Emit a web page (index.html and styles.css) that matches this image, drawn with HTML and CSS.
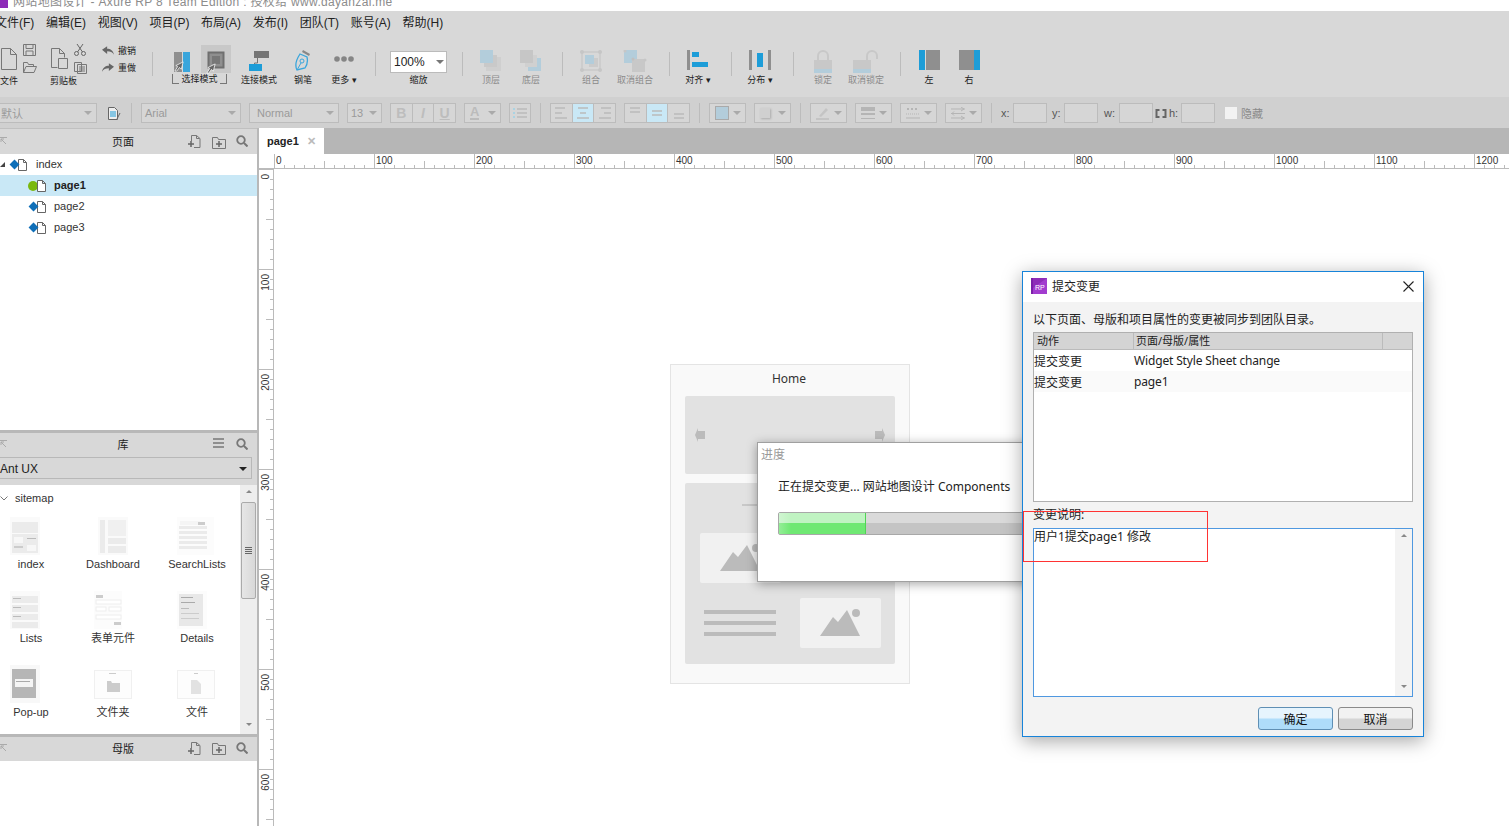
FILE: index.html
```html
<!DOCTYPE html>
<html>
<head>
	<meta charset="utf-8">
	<title>网站地图设计 - Axure RP 8 Team Edition</title>
	<link rel="stylesheet" href="styles.css">
</head>
<body>
	<svg class="defs" width="0" height="0">
		<symbol id="cursor" viewBox="0 0 12 12"><path d="M1 11 4 6 2 5 10 1 8 9 6 7 3 11z" fill="#666" stroke="#fff" stroke-width=".8"/></symbol>
		<symbol id="tree-doc" viewBox="0 0 9 12"><path d="M.5.5h5l3 3v8h-8z M5.500.5v3h3" fill="#fff" stroke="#666"/></symbol>
		<symbol id="add-page" viewBox="0 0 13 13"><path d="M3.500 6V.5h5l3.500 3v9H6 M8.500.5v3h3" fill="none" stroke="#777"/><path d="M0 9h6M3 6v6" stroke="#666" stroke-width="1.500"/></symbol>
		<symbol id="add-folder" viewBox="0 0 14 12"><path d="M.5 11.500V.5h5l1 2h7v9z" fill="none" stroke="#777"/><path d="M4 7h6M7 4v6" stroke="#666" stroke-width="1.500"/></symbol>
		<symbol id="search" viewBox="0 0 12 12"><circle cx="5" cy="5" r="3.800" fill="none" stroke="#777" stroke-width="1.800"/><path d="M8 8l3.500 3.500" stroke="#777" stroke-width="2"/></symbol>
		<symbol id="pin" viewBox="0 0 8 8"><path d="M0 .5h7M1 2l5 5M1 2v3M1 2h3" fill="none" stroke="#aaa"/></symbol>
		<symbol id="mountain" viewBox="0 0 81 50"><path d="M20 38 33 19 38 24 47 12 60 38z" fill="#bbb"/><circle cx="56" cy="15" r="4" fill="#bbb"/></symbol>
	</svg>

	<div class="titlebar">
		<i class="title_logo"></i>
		<span>网站地图设计 - Axure RP 8 Team Edition : 授权给 www.dayanzai.me</span>
	</div>

	<ul class="menubar">
		<li>文件(F)</li><li>编辑(E)</li><li>视图(V)</li><li>项目(P)</li><li>布局(A)</li><li>发布(I)</li><li>团队(T)</li><li>账号(A)</li><li>帮助(H)</li>
	</ul>

	<div class="ribbon">
		<div class="group">
			<div class="group_icons">
				<svg width="18" height="24" class="big_doc"><path d="M1.500 2.500h9l6 6v15h-15z M10.500 2.500v6h6" fill="none" stroke="#777"/></svg>
				<div class="mini_col first">
					<svg width="13" height="12"><path d="M.5.5h12v11H.5z M3 .5v4h7v-4 M3 11.500V7h7v4.500" fill="none" stroke="#777"/></svg>
					<svg width="14" height="12"><path d="M.5 11.500V1.500h4l1 2h5v2 M.5 11.500l2.500-6h10.500l-2.500 6z" fill="none" stroke="#777"/></svg>
				</div>
			</div>
			<p class="group_label">文件</p>
		</div>
		<div class="group clip">
			<div class="group_icons">
				<svg width="18" height="24" class="big_doc"><path d="M1.500 2.500h8l5 5v4 M1.500 2.500v19h6 M9.500 2.500v5h5 M8.500 12.500h9v10h-9z" fill="none" stroke="#777"/></svg>
				<div class="mini_col second">
					<svg width="12" height="12"><circle cx="2.500" cy="9.500" r="2" fill="none" stroke="#666"/><circle cx="9.500" cy="9.500" r="2" fill="none" stroke="#666"/><path d="M3.500 8 9 0M8.500 8 3 0" stroke="#666"/></svg>
					<svg width="13" height="13"><path d="M.5 1.500h7v9h-7z M3.500 3.500h9v9h-9z M5 6h6M5 8h6M5 10h6" fill="#d8d8d8" stroke="#777"/></svg>
				</div>
			</div>
			<p class="group_label">剪贴板</p>
		</div>
		<div class="undo_col gap16">
			<div class="undo_row"><svg width="12" height="9" viewBox="0 0 14 10"><path d="M0 4 6 0v3c4 0 7 2 8 7-2-3-4-4-8-4v3z" fill="#666"/></svg><span>撤销</span></div>
			<div class="undo_row"><svg width="12" height="9" viewBox="0 0 14 10"><path d="M14 4 8 0v3C4 3 1 5 0 10c2-3 4-4 8-4v3z" fill="#666"/></svg><span>重做</span></div>
		</div>
		<i class="rb_sep gap16"></i>
		<div class="tool mode gap19">
			<div class="mode_icons">
				<div class="mode_plain">
					<svg width="18" height="22"><rect x="0" y="2" width="8" height="20" fill="#8f8f8f"/><rect x="9" y="2" width="7" height="20" fill="#3aa6dc"/><use href="#cursor" x="0" y="11" width="11" height="11"/></svg>
				</div>
				<div class="mode_on">
					<svg width="20" height="24"><rect x="2.500" y="2.500" width="15" height="15" fill="#8f8f8f" stroke="#6f6f6f" stroke-width="2"/><rect x="6" y="6" width="8" height="8" fill="#777"/><use href="#cursor" x="0" y="13" width="11" height="11"/></svg>
				</div>
			</div>
			<p class="label bracket">选择模式</p>
		</div>
		<div class="tool wide gap10">
			<svg width="20" height="21"><rect x="5" y="1" width="15" height="7" fill="#757575"/><path d="M8.500 8v5h-3v2" fill="none" stroke="#757575"/><rect x="0" y="14" width="13" height="7" fill="#1d9dd8"/></svg>
			<p class="label">连接模式</p>
		</div>
		<div class="tool narrow gap16">
			<svg width="16" height="22"><path d="M8 0l7 4-1 2-7-4z" fill="#888"/><path d="M5 4l7 3c1 4 0 8-2 11l-8 2c-2-4-1-10 3-16z" fill="none" stroke="#3aa6dc" stroke-width="1.300"/><circle cx="7" cy="11" r="2" fill="none" stroke="#3aa6dc"/><path d="M2 20l4-7" stroke="#3aa6dc"/></svg>
			<p class="label">钢笔</p>
		</div>
		<div class="tool more gap19">
			<svg width="22" height="12"><circle cx="4" cy="6" r="2.800" fill="#858585"/><circle cx="11" cy="6" r="2.800" fill="#858585"/><circle cx="18" cy="6" r="2.800" fill="#858585"/></svg>
			<p class="label">更多 ▾</p>
		</div>
		<i class="rb_sep gap19"></i>
		<div class="tool zoom gap14">
			<div class="zoom_box"><span>100%</span><i class="caret"></i></div>
			<p class="label">缩放</p>
		</div>
		<i class="rb_sep gap15"></i>
		<div class="tool off gap13">
			<svg width="22" height="21"><path d="M6 7h15v14H6z" fill="#cfcfcf"/><rect x="4" y="5" width="13" height="12" fill="#c9c9c9"/><rect x="0" y="0" width="13" height="13" fill="#b3cddb"/></svg>
			<p class="label">顶层</p>
		</div>
		<div class="tool off gap10">
			<svg width="22" height="21"><path d="M8 8h13v13H8z" fill="#b3cddb"/><rect x="5" y="5" width="12" height="12" fill="#d0d0d0"/><rect x="0" y="0" width="13" height="13" fill="#c6c6c6"/></svg>
			<p class="label">底层</p>
		</div>
		<i class="rb_sep gap16"></i>
		<div class="tool off gap13">
			<svg width="22" height="22"><rect x="2" y="2" width="18" height="18" fill="none" stroke="#c6c6c6" stroke-width="1.200"/><circle cx="2" cy="2" r="2" fill="#c6c6c6"/><circle cx="20" cy="2" r="2" fill="#c6c6c6"/><circle cx="2" cy="20" r="2" fill="#c6c6c6"/><circle cx="20" cy="20" r="2" fill="#c6c6c6"/><rect x="9" y="8" width="9" height="9" fill="#cbcbcb"/><rect x="5" y="5" width="9" height="9" fill="#b3cddb"/></svg>
			<p class="label">组合</p>
		</div>
		<div class="tool wide off gap11">
			<svg width="24" height="23"><rect x="1" y="0" width="13" height="13" fill="#b3cddb"/><rect x="9" y="9" width="13" height="13" fill="#c8c8c8"/><circle cx="2" cy="1" r="1.500" fill="#c6c6c6"/><circle cx="10" cy="9" r="1.500" fill="#c0c0c0"/><circle cx="22" cy="10" r="1.500" fill="#c6c6c6"/></svg>
			<p class="label">取消组合</p>
		</div>
		<i class="rb_sep gap16"></i>
		<div class="tool gap13">
			<svg width="22" height="20"><rect x="0" y="0" width="3" height="20" fill="#8f8f8f"/><rect x="5" y="2" width="7" height="5" fill="#1d9dd8"/><rect x="5" y="12" width="16" height="5" fill="#1d9dd8"/></svg>
			<p class="label">对齐 ▾</p>
		</div>
		<i class="rb_sep gap18"></i>
		<div class="tool gap13">
			<svg width="22" height="20"><rect x="0" y="0" width="3" height="20" fill="#8f8f8f"/><rect x="8" y="3" width="6" height="14" fill="#1d9dd8"/><rect x="19" y="0" width="3" height="20" fill="#8f8f8f"/></svg>
			<p class="label">分布 ▾</p>
		</div>
		<i class="rb_sep gap18"></i>
		<div class="tool off gap14">
			<svg width="18" height="23"><path d="M4 11V6a5 5 0 0 1 10 0v5" fill="none" stroke="#c8c8c8" stroke-width="2"/><rect x="0" y="10" width="18" height="9" fill="#c8c8c8"/><rect x="0" y="19" width="18" height="4" fill="#b3cddb"/></svg>
			<p class="label">锁定</p>
		</div>
		<div class="tool wide off gap10">
			<svg width="26" height="23"><path d="M14 11V6a5 5 0 0 1 10 0v3" fill="none" stroke="#c8c8c8" stroke-width="2"/><rect x="0" y="10" width="18" height="9" fill="#c8c8c8"/><rect x="0" y="19" width="18" height="4" fill="#b3cddb"/></svg>
			<p class="label">取消锁定</p>
		</div>
		<i class="rb_sep gap16"></i>
		<div class="tool dark gap13">
			<svg width="21" height="20"><rect x="0" y="0" width="6" height="20" fill="#1d9dd8"/><rect x="7" y="0" width="14" height="20" fill="#8f8f8f"/></svg>
			<p class="label">左</p>
		</div>
		<div class="tool dark gap10">
			<svg width="21" height="20"><rect x="0" y="0" width="15" height="20" fill="#8f8f8f"/><rect x="15" y="0" width="6" height="20" fill="#1d9dd8"/></svg>
			<p class="label">右</p>
		</div>
	</div>

	<div class="formatbar">
		<div class="fsel style_sel">默认<i class="caret"></i></div>
		<svg class="ml3" width="13" height="13"><path d="M.5.5h6l3 3v9h-9z" fill="#eee" stroke="#666"/><path d="M2 5h6M2 7h6M2 9h6" stroke="#1d9dd8"/><path d="M9 12l3-6" stroke="#666"/></svg>
		<i class="fsep ml2"></i>
		<div class="fsel font_sel ml1">Arial<i class="caret"></i></div>
		<div class="fsel normal_sel">Normal<i class="caret"></i></div>
		<div class="fsel size_sel">13<i class="caret"></i></div>
		<div class="fbtns"><b>B</b><b class="it">I</b><b class="un">U</b></div>
		<div class="fsel ico_sel"><span class="a_ico">A</span><i class="caret"></i></div>
		<div class="fcell list_btn"><svg width="14" height="10"><path d="M0 1h2M0 5h2M0 9h2" stroke="#a9d3e3" stroke-width="2"/><path d="M4 1h10M4 5h10M4 9h10" stroke="#bbb" stroke-width="1.500"/></svg></div>
		<i class="fsep ml1"></i>
		<div class="fbtns ml1">
			<span><svg width="12" height="12"><path d="M0 1h10M0 6h7M0 11h12" stroke="#bbb" stroke-width="1.500"/></svg></span>
			<span class="on"><svg width="12" height="12"><path d="M1 1h10M3 6h6M0 11h12" stroke="#bbb" stroke-width="1.500"/></svg></span>
			<span><svg width="12" height="12"><path d="M2 1h10M5 6h7M0 11h12" stroke="#bbb" stroke-width="1.500"/></svg></span>
		</div>
		<div class="fbtns">
			<span><svg width="12" height="12"><path d="M1 1h10M1 5h10" stroke="#bbb" stroke-width="1.500"/></svg></span>
			<span class="on"><svg width="12" height="12"><path d="M1 4h10M1 8h10" stroke="#bbb" stroke-width="1.500"/></svg></span>
			<span><svg width="12" height="12"><path d="M1 7h10M1 11h10" stroke="#bbb" stroke-width="1.500"/></svg></span>
		</div>
		<i class="fsep ml1"></i>
		<div class="fsel ico_sel ml1"><i class="fill_ico"></i><i class="caret"></i></div>
		<div class="fsel ico_sel"><i class="shadow_ico"></i><i class="caret"></i></div>
		<i class="fsep ml1"></i>
		<div class="fsel ico_sel ml1"><svg width="14" height="13"><path d="M3 9l7-8 2 2-7 7z" fill="#c4c4c4"/><path d="M0 12h13" stroke="#c4c4c4" stroke-width="2"/></svg><i class="caret"></i></div>
		<div class="fsel ico_sel"><svg width="14" height="13"><rect width="14" height="4" fill="#b5b5b5"/><rect y="6" width="14" height="2" fill="#b5b5b5"/><rect y="11" width="14" height="1" fill="#b5b5b5"/></svg><i class="caret"></i></div>
		<div class="fsel ico_sel"><svg width="14" height="13"><path d="M1 2h12" stroke="#b5b5b5" stroke-width="2" stroke-dasharray="2 2"/><path d="M0 7h14" stroke="#b5b5b5" stroke-dasharray="1 1"/><path d="M0 11h14" stroke="#b5b5b5"/></svg><i class="caret"></i></div>
		<div class="fsel ico_sel"><svg width="14" height="13"><path d="M0 2h14M0 6.500h14M0 11h14M10 0l3 2-3 2M3 4.500 1 6.500l2 2M10 9l3 2-3 2" fill="none" stroke="#b5b5b5"/></svg><i class="caret"></i></div>
		<i class="fsep ml1"></i>
		<div class="coords">
			<span class="cx">x:</span><i class="cinput"></i>
			<span class="cy">y:</span><i class="cinput"></i>
			<span class="cw">w:</span><i class="cinput"></i>
			<svg class="clock" width="12" height="9"><path d="M4.500 1h-3v7h3M7.500 1h3v7h-3" fill="none" stroke="#666" stroke-width="2"/></svg>
			<span class="ch">h:</span><i class="cinput"></i>
			<i class="ccheck"></i>
			<span class="chide">隐藏</span>
		</div>
	</div>

	<div class="workspace">
		<div class="side">
			<div class="panel_head">
				<svg class="pin" width="8" height="8"><use href="#pin"/></svg>
				<span class="panel_title">页面</span>
				<svg class="pi1" width="13" height="13"><use href="#add-page"/></svg>
				<svg class="pi2" width="14" height="12"><use href="#add-folder"/></svg>
				<svg class="pi3" width="12" height="12"><use href="#search"/></svg>
			</div>
			<ul class="tree">
				<li class="root"><i class="tri"></i><i class="diamond"></i><svg width="9" height="12"><use href="#tree-doc"/></svg><span>index</span></li>
				<li class="child sel"><i class="dot"></i><svg width="9" height="12"><use href="#tree-doc"/></svg><span>page1</span></li>
				<li class="child"><i class="diamond"></i><svg width="9" height="12"><use href="#tree-doc"/></svg><span>page2</span></li>
				<li class="child"><i class="diamond"></i><svg width="9" height="12"><use href="#tree-doc"/></svg><span>page3</span></li>
			</ul>
			<div class="panel_head lib_head">
				<svg class="pin" width="8" height="8"><use href="#pin"/></svg>
				<span class="panel_title">库</span>
				<svg class="pi2b" width="11" height="10"><path d="M0 1h11M0 5h11M0 9h11" stroke="#777" stroke-width="1.500"/></svg>
				<svg class="pi3" width="12" height="12"><use href="#search"/></svg>
			</div>
			<div class="lib_sel_row"><div class="lib_sel">Ant UX<i class="caret_dark"></i></div></div>
			<div class="lib_list">
				<div class="lib_body">
					<p class="lib_cat"><svg width="8" height="5"><path d="M.5.5 4 4 7.500.5" fill="none" stroke="#777"/></svg>sitemap</p>
					<div class="lib_grid">
						<div class="lib_item">
							<svg class="thumb" width="30" height="38"><rect width="30" height="38" fill="#fafafa"/><rect x="2" y="5" width="26" height="11" fill="#ebebeb"/><rect x="2" y="17" width="26" height="19" fill="#ebebeb"/><rect x="4" y="20" width="9" height="6" fill="#f7f7f7"/><rect x="17" y="21" width="9" height="1" fill="#bbb"/><rect x="4" y="29" width="9" height="2" fill="#ccc"/><rect x="17" y="28" width="9" height="6" fill="#f7f7f7"/></svg>
							<span>index</span>
						</div>
						<div class="lib_item">
							<svg class="thumb" width="30" height="38"><rect width="30" height="38" fill="#fafafa"/><rect x="2" y="3" width="5" height="33" fill="#ebebeb"/><rect x="10" y="3" width="18" height="16" fill="#f0f0f0"/><rect x="10" y="21" width="18" height="6" fill="#ebebeb"/><rect x="10" y="29" width="18" height="7" fill="#ebebeb"/></svg>
							<span>Dashboard</span>
						</div>
						<div class="lib_item">
							<svg class="thumb" width="37" height="38"><rect width="37" height="38" fill="#fcfcfc"/><rect x="3" y="4" width="20" height="4" fill="#f5f5f5"/><rect x="21" y="5" width="7" height="3" fill="#ccc"/><rect x="2" y="9" width="28" height="3" fill="#ebebeb"/><rect x="2" y="14" width="28" height="3" fill="#ebebeb"/><rect x="2" y="19" width="28" height="3" fill="#ebebeb"/><rect x="2" y="24" width="28" height="3" fill="#ebebeb"/><rect x="2" y="29" width="28" height="3" fill="#ebebeb"/></svg>
							<span>SearchLists</span>
						</div>
						<div class="lib_item">
							<svg class="thumb" width="30" height="38"><rect width="30" height="38" fill="#fafafa"/><rect x="2" y="5" width="26" height="7" fill="#ebebeb"/><rect x="2" y="14" width="26" height="7" fill="#ebebeb"/><rect x="2" y="23" width="26" height="6" fill="#ebebeb"/><rect x="2" y="31" width="26" height="6" fill="#ebebeb"/><rect x="3" y="7" width="8" height="1" fill="#bbb"/><rect x="3" y="16" width="8" height="1" fill="#bbb"/><rect x="3" y="25" width="8" height="1" fill="#bbb"/></svg>
							<span>Lists</span>
						</div>
						<div class="lib_item">
							<svg class="thumb" width="38" height="38"><rect width="28" height="38" fill="#fcfcfc"/><rect x="2" y="4" width="7" height="3" fill="#ccc"/><rect x="2" y="9" width="25" height="4" fill="#fff" stroke="#eee"/><rect x="2" y="16" width="10" height="4" fill="#fff" stroke="#eee"/><rect x="15" y="16" width="12" height="4" fill="#fff" stroke="#eee"/><rect x="2" y="24" width="25" height="4" fill="#fff" stroke="#eee"/><rect x="20" y="31" width="7" height="3" fill="#ccc"/></svg>
							<span>表单元件</span>
						</div>
						<div class="lib_item">
							<svg class="thumb" width="37" height="38"><rect width="30" height="38" fill="#fcfcfc"/><rect x="2" y="3" width="24" height="32" fill="#e8e8e8"/><rect x="4" y="6" width="12" height="1" fill="#aaa"/><rect x="4" y="11" width="14" height="1" fill="#aaa"/><rect x="4" y="17" width="8" height="1" fill="#bbb"/><rect x="4" y="22" width="18" height="1" fill="#ccc"/><rect x="4" y="27" width="18" height="1" fill="#ccc"/></svg>
							<span>Details</span>
						</div>
						<div class="lib_item">
							<svg class="thumb" width="30" height="38"><rect width="30" height="38" fill="#f8f8f8"/><rect x="2" y="4" width="24" height="29" fill="#b6b6b6"/><rect x="5" y="14" width="18" height="8" fill="#f4f4f4"/><rect x="6" y="16" width="14" height="1" fill="#aaa"/></svg>
							<span>Pop-up</span>
						</div>
						<div class="lib_item">
							<svg class="thumb" width="38" height="38"><rect x=".5" y="5.500" width="37" height="28" fill="#fdfdfd" stroke="#f0f0f0"/><path d="M13 16h4l1 2h8v9H13z" fill="#ccc"/><rect x="15" y="8" width="7" height="1" fill="#ccc"/></svg>
							<span>文件夹</span>
						</div>
						<div class="lib_item">
							<svg class="thumb" width="38" height="38"><rect x=".5" y="5.500" width="37" height="28" fill="#fdfdfd" stroke="#f0f0f0"/><path d="M14 15h6l4 4v10H14z" fill="#e2e2e2"/><rect x="17" y="8" width="4" height="1" fill="#ccc"/></svg>
							<span>文件</span>
						</div>
					</div>
				</div>
				<div class="lib_scroll">
					<i class="sc_up"></i>
					<div class="sc_thumb"><i></i></div>
					<i class="sc_down"></i>
				</div>
			</div>
			<div class="panel_head master_head">
				<svg class="pin" width="8" height="8"><use href="#pin"/></svg>
				<span class="panel_title">母版</span>
				<svg class="pi1" width="13" height="13"><use href="#add-page"/></svg>
				<svg class="pi2" width="14" height="12"><use href="#add-folder"/></svg>
				<svg class="pi3" width="12" height="12"><use href="#search"/></svg>
			</div>
		</div>

		<div class="main">
			<div class="tabs"><div class="tab"><b>page1</b><span>✕</span></div></div>
			<div class="hruler_row">
				<div class="ruler_corner"></div>
				<div class="hruler">
					<span>0</span><span>100</span><span>200</span><span>300</span><span>400</span><span>500</span><span>600</span><span>700</span><span>800</span><span>900</span><span>1000</span><span>1100</span><span>1200</span>
				</div>
			</div>
			<div class="stage">
				<div class="vruler">
					<span><em>0</em></span><span><em>100</em></span><span><em>200</em></span><span><em>300</em></span><span><em>400</em></span><span><em>500</em></span><span><em>600</em></span>
				</div>
			</div>
		</div>
	</div>

	<!-- 画布上的线框 -->
	<div class="wire">
		<p class="wire_title">Home</p>
		<div class="wire_hero">
			<svg width="10" height="14"><path d="M0 7 3 0v3h7v8H3v3z" fill="#bbb"/></svg>
			<svg width="10" height="14"><path d="M10 7 7 0v3H0v8h7v3z" fill="#bbb"/></svg>
		</div>
		<div class="wire_block">
			<i class="wire_rule"></i>
			<div class="wire_img first"><svg width="81" height="50"><use href="#mountain"/></svg></div>
			<div class="wire_row">
				<div class="wire_lines"><i></i><i></i><i></i></div>
				<div class="wire_img"><svg width="81" height="50"><use href="#mountain"/></svg></div>
			</div>
		</div>
	</div>

	<div class="progress_win">
		<p class="progress_title">进度</p>
		<p class="progress_text">正在提交变更... 网站地图设计 Components</p>
		<div class="progress_bar"><i></i></div>
	</div>

	<div class="commit_win">
		<div class="commit_head">
			<svg width="16" height="16"><rect width="16" height="16" fill="#a23ccf"/><rect width="2" height="16" fill="#7a1fa8"/><path d="M2 0h14L2 10z" fill="#8e2cb8"/></svg>
			<span class="commit_rp">RP</span>
			<span>提交变更</span>
			<svg class="commit_close" width="11" height="11"><path d="M.5.5l10 10M10.500.5l-10 10" stroke="#222" stroke-width="1.100"/></svg>
		</div>
		<div class="commit_body">
			<p class="commit_tip">以下页面、母版和项目属性的变更被同步到团队目录。</p>
			<div class="commit_table">
				<div class="ct_head"><span class="c1">动作</span><span class="c2">页面/母版/属性</span><span class="c3"></span></div>
				<div class="ct_row"><span class="c1">提交变更</span><span>Widget Style Sheet change</span></div>
				<div class="ct_row alt"><span class="c1">提交变更</span><span>page1</span></div>
			</div>
			<p class="commit_label">变更说明:</p>
			<div class="commit_note">
				<p>用户1提交page1 修改</p>
				<div class="note_scroll"><i class="sc_up"></i><i class="sc_down"></i></div>
			</div>
			<div class="commit_btns">
				<button class="btn primary">确定</button>
				<button class="btn">取消</button>
			</div>
		</div>
	</div>
	<div class="red_mark"></div>
</body>
</html>
```

FILE: styles.css
```css
html,body,p,ul,li {
	margin: 0;
	padding: 0;
}
li {
	list-style-type: none;
}
i,em {
	font-style: normal;
	display: block;
}
html,body {
	width: 1509px;
	height: 826px;
	overflow: hidden;
}
body {
	position: relative;
	background: #fff;
	color: #222;
	font-family: "Liberation Sans", "Noto Sans CJK SC", sans-serif;
	font-size: 11px;
	display: flex;
	flex-direction: column;
}
svg {
	display: block;
	flex: none;
}
.defs {
	position: absolute;
}

/* 标题栏 */
.titlebar {
	height: 11px;
	display: flex;
	overflow: hidden;
	flex: none;
}
.title_logo {
	width: 8px;
	height: 8px;
	background: #8e2cb8;
}
.titlebar span {
	margin-left: 5px;
	line-height: 5px;
	font-size: 12px;
	letter-spacing: .32px;
	color: #8c8c8c;
	white-space: nowrap;
}

/* 菜单 */
.menubar {
	height: 24px;
	flex: none;
	background: #d8d8d8;
	display: flex;
	gap: 11.7px;
	line-height: 24px;
	font-size: 12px;
	color: #222;
}
.menubar li:first-child {
	margin-left: -5px;
}

/* 工具条 */
.ribbon {
	height: 62px;
	flex: none;
	background: #d8d8d8;
	display: flex;
	padding-top: 9px;
	box-sizing: border-box;
}
.gap10 { margin-left: 10px; }
.gap11 { margin-left: 11px; }
.gap13 { margin-left: 13px; }
.gap14 { margin-left: 14px; }
.gap15 { margin-left: 15px; }
.gap16 { margin-left: 16px; }
.gap18 { margin-left: 18px; }
.gap19 { margin-left: 19px; }
.group {
	display: flex;
	flex-direction: column;
	width: 37px;
}
.group.clip {
	width: 36px;
	margin-left: 13px;
}
.group_icons {
	display: flex;
	height: 31px;
}
.big_doc {
	margin-top: 2px;
}
.mini_col {
	display: flex;
	flex-direction: column;
	gap: 5px;
}
.mini_col.first {
	margin-left: 5px;
}
.mini_col.second {
	margin-left: 6px;
}
.group_label {
	font-size: 9px;
	line-height: 12px;
	color: #222;
	white-space: nowrap;
}
.undo_col {
	width: 34px;
	display: flex;
	flex-direction: column;
	gap: 5px;
}
.undo_row {
	display: flex;
	align-items: center;
	gap: 4px;
	height: 12px;
	font-size: 9px;
	white-space: nowrap;
}
.rb_sep {
	width: 1px;
	height: 24px;
	margin-top: 8px;
	background: #bcbcbc;
}
.tool {
	width: 30px;
	display: flex;
	flex-direction: column;
	align-items: center;
}
.tool > svg {
	height: 30px;
	padding-top: 6px;
	box-sizing: border-box;
}
.tool.wide {
	width: 36px;
}
.tool.narrow {
	width: 20px;
}
.tool.more {
	width: 24px;
}
.tool.more > svg {
	padding-top: 9px;
}
.label {
	font-size: 9px;
	line-height: 12px;
	color: #222;
	white-space: nowrap;
}
.off .label {
	color: #8a8a8a;
}
.mode {
	width: 59px;
	align-items: flex-start;
}
.mode_icons {
	display: flex;
	height: 29px;
	margin-left: 2px;
}
.mode_plain {
	width: 27px;
	padding-top: 6px;
	box-sizing: border-box;
}
.mode_on {
	width: 30px;
	height: 28px;
	margin-top: 1px;
	background: #c8c8c8;
	padding: 5px 0 0 5px;
	box-sizing: border-box;
}
.bracket {
	width: 55px;
	height: 10px;
	line-height: 11px;
	margin-top: 1px;
	text-align: center;
	box-sizing: border-box;
	border: 1px solid #777;
	border-top: 0;
	border-image: linear-gradient(90deg, #777 0 7px, transparent 7px 48px, #777 48px) 1;
}
.zoom {
	width: 57px;
}
.zoom_box {
	width: 57px;
	height: 22px;
	margin-top: 7px;
	margin-bottom: 1px;
	background: #fff;
	border: 1px solid #bbb;
	box-sizing: border-box;
	display: flex;
	align-items: center;
	justify-content: space-between;
	padding: 0 2px 0 3px;
	font-size: 12px;
	color: #222;
}
.zoom .caret {
	border-top-color: #777;
}
.caret {
	width: 0;
	height: 0;
	border-left: 4px solid transparent;
	border-right: 4px solid transparent;
	border-top: 4px solid #aaa;
	flex: none;
}

/* 格式条 */
.formatbar {
	height: 31px;
	flex: none;
	background: #d0d0d0;
	display: flex;
	align-items: center;
	gap: 8px;
	box-sizing: border-box;
	padding-top: 1px;
	color: #9a9a9a;
}
.ml1 { margin-left: 1px; }
.ml2 { margin-left: 2px; }
.ml3 { margin-left: 3px; }
.fsep {
	width: 1px;
	height: 20px;
	background: #bcbcbc;
}
.fsel,.fcell,.fbtns {
	height: 20px;
	box-sizing: border-box;
	background: #d6d6d6;
	border: 1px solid #bcbcbc;
	display: flex;
	align-items: center;
	flex: none;
}
.fsel {
	justify-content: space-between;
	padding: 0 4px 0 3px;
}
.style_sel {
	width: 98px;
	margin-left: -1px;
	padding-left: 1px;
}
.font_sel { width: 100px; }
.normal_sel { width: 90px; padding-left: 7px; }
.size_sel { width: 35px; }
.ico_sel { width: 37px; padding-left: 5px; }
.fcell {
	width: 22px;
	justify-content: center;
}
.fbtns {
	width: 66px;
}
.fbtns > b,.fbtns > span {
	flex: 1;
	height: 18px;
	display: flex;
	align-items: center;
	justify-content: center;
	border-left: 1px solid #bcbcbc;
	color: #bdbdbd;
	font-size: 14px;
}
.fbtns > :first-child {
	border-left: 0;
}
.fbtns .on {
	background: #c9e8f6;
}
.it {
	font-style: italic;
}
.un {
	text-decoration: underline;
}
.a_ico {
	color: #bbb;
	font-size: 13px;
	font-weight: bold;
	border-bottom: 2px solid #bbb;
	line-height: 12px;
}
.fill_ico {
	width: 12px;
	height: 12px;
	background: #b3cddb;
	border: 1px solid #aaa;
}
.shadow_ico {
	width: 10px;
	height: 10px;
	background: #d0d0d0;
	box-shadow: 1px 1px 2px #aaa;
}
.coords {
	display: flex;
	align-items: center;
	margin-left: -8px;
	color: #555;
}
.cinput {
	width: 34px;
	height: 20px;
	box-sizing: border-box;
	background: #d6d6d6;
	border: 1px solid #bcbcbc;
}
.cx { margin-left: 9px; width: 12px; }
.cy { margin-left: 5px; width: 12px; }
.cw { margin-left: 6px; width: 15px; }
.clock { margin-left: 2px; }
.ch { margin-left: 2px; width: 12px; }
.ccheck {
	width: 12px;
	height: 12px;
	margin-left: 10px;
	background: #f2f2f2;
}
.chide {
	margin-left: 4px;
	color: #8a8a8a;
}

/* 左侧面板 */
.workspace {
	flex: 1;
	display: flex;
	min-height: 0;
}
.side {
	width: 257px;
	flex: none;
	border-right: 2px solid #b8b8b8;
	display: flex;
	flex-direction: column;
}
.panel_head {
	height: 26px;
	flex: none;
	box-sizing: border-box;
	background: #d8d8d8;
	border-top: 1px solid #c0c0c0;
	display: flex;
	align-items: center;
	position: relative;
}
.pin {
	position: absolute;
	left: 0;
	top: 8px;
}
.panel_title {
	flex: 1;
	text-align: center;
	padding: 0 11px 2px 0;
	color: #222;
}
.pi1,.pi2,.pi2b,.pi3 {
	position: absolute;
	top: 6px;
}
.pi1 { left: 188px; }
.pi2 { left: 212px; top: 8px; }
.pi2b { left: 213px; top: 6px; }
.pi3 { left: 236px; }
.tree {
	height: 277px;
	flex: none;
}
.tree li {
	height: 21px;
	display: flex;
	align-items: center;
	color: #333;
}
.child {
	padding-left: 29px;
}
.tree li span {
	margin: 0 0 2px 9px;
}
.tree .child span {
	margin-left: 8px;
}
.tree li svg {
	margin-left: -1px;
}
.tree .sel {
	background: #c9e8f6;
	font-weight: bold;
	color: #222;
}
.tri {
	width: 0;
	height: 0;
	border-bottom: 5px solid #444;
	border-left: 5px solid transparent;
	margin-right: 5px;
}
.diamond {
	width: 7px;
	height: 7px;
	margin: 0 1px;
	background: #0f6fb8;
	transform: rotate(45deg);
	flex: none;
}
.dot {
	width: 10px;
	height: 10px;
	margin-left: -1px;
	border-radius: 50%;
	background: #7ab80e;
	flex: none;
}
.lib_head,.master_head {
	border-top: 3px solid #b8b8b8;
	height: 27px;
}
.lib_head {
	margin-top: -1px;
}
.lib_head .pi2b,.lib_head .pi3,.master_head .pi1,.master_head .pi3 {
	top: 5px;
}
.master_head .pi2 {
	top: 6px;
}
.lib_head .pin,.master_head .pin {
	top: 7px;
}
.lib_sel_row {
	height: 28px;
	flex: none;
	background: #d8d8d8;
}
.lib_sel {
	width: 252px;
	height: 22px;
	box-sizing: border-box;
	border: 1px solid #b8b8b8;
	border-left: 0;
	display: flex;
	align-items: center;
	justify-content: space-between;
	padding: 2px 4px 0 0;
	font-size: 12px;
	color: #222;
}
.caret_dark {
	width: 0;
	height: 0;
	border-left: 4px solid transparent;
	border-right: 4px solid transparent;
	border-top: 4px solid #222;
}
.lib_list {
	height: 249px;
	flex: none;
	display: flex;
}
.lib_body {
	width: 240px;
	flex: none;
	overflow: hidden;
}
.lib_cat {
	display: flex;
	align-items: center;
	gap: 7px;
	height: 26px;
	color: #333;
}
.lib_grid {
	margin-top: 6px;
	display: grid;
	grid-template-columns: 62px 102px 66px;
	grid-auto-rows: 74px;
}
.lib_item {
	display: flex;
	flex-direction: column;
	align-items: center;
	color: #333;
}
.lib_item:nth-child(3n+1) .thumb {
	margin-left: -12px;
}
.lib_item:nth-child(3n) .thumb {
	margin-left: -3px;
}
.lib_item span {
	margin-top: 3px;
	line-height: 13px;
	white-space: nowrap;
}
.lib_scroll {
	width: 17px;
	flex: none;
	background: #eee;
	position: relative;
}
.sc_up,.sc_down {
	position: absolute;
	left: 6px;
	width: 0;
	height: 0;
	border-left: 3px solid transparent;
	border-right: 3px solid transparent;
}
.sc_up {
	top: 5px;
	border-bottom: 3px solid #888;
}
.sc_down {
	bottom: 8px;
	border-top: 3px solid #888;
}
.sc_thumb {
	position: absolute;
	top: 17px;
	left: 1px;
	width: 15px;
	height: 97px;
	box-sizing: border-box;
	border: 1px solid #aaa;
	border-radius: 2px;
	background: linear-gradient(90deg, #e6e6e6, #d8d8d8);
	display: flex;
	align-items: center;
	justify-content: center;
}
.sc_thumb i {
	width: 7px;
	height: 7px;
	background: repeating-linear-gradient(#666 0 1px, transparent 1px 2px);
}

/* 主区 */
.main {
	flex: 1;
	display: flex;
	flex-direction: column;
	min-width: 0;
}
.tabs {
	height: 26px;
	flex: none;
	background: #b6b6b6;
}
.tab {
	width: 65px;
	height: 26px;
	background: #fff;
	display: flex;
	align-items: center;
	padding-left: 8px;
	box-sizing: border-box;
	gap: 8px;
	color: #222;
}
.tab span {
	color: #bbb;
	font-size: 11px;
	font-weight: bold;
}
.hruler_row {
	height: 15px;
	flex: none;
	display: flex;
	border-bottom: 1px solid #bbb;
	box-sizing: border-box;
}
.ruler_corner {
	width: 15px;
	flex: none;
}
.hruler {
	display: flex;
	flex: 1;
	overflow: hidden;
}
.hruler span {
	width: 100px;
	flex: none;
	box-sizing: border-box;
	border-left: 1px solid #bbb;
	padding-left: 1px;
	font-size: 10px;
	line-height: 13px;
	color: #333;
	background:
		linear-gradient(#bbb, #bbb) 49px 100%/1px 7px no-repeat,
		repeating-linear-gradient(90deg, transparent 0 9px, #bbb 9px 10px) 0 100%/100% 3px no-repeat;
}
.stage {
	flex: 1;
	display: flex;
	min-height: 0;
}
.vruler {
	width: 15px;
	flex: none;
	box-sizing: border-box;
	border-right: 1px solid #bbb;
	overflow: hidden;
	display: flex;
	flex-direction: column;
}
.vruler span {
	height: 100px;
	flex: none;
	box-sizing: border-box;
	border-top: 1px solid #bbb;
	padding: 4px 0 0 2px;
	font-size: 10px;
	color: #333;
	background:
		linear-gradient(#bbb, #bbb) 100% 49px/7px 1px no-repeat,
		repeating-linear-gradient(transparent 0 9px, #bbb 9px 10px) 100% 0/3px 100% no-repeat;
}
.vruler em {
	width: 10px;
	line-height: 10px;
	writing-mode: vertical-rl;
	transform: rotate(180deg);
}

/* 线框 */
.wire {
	position: absolute;
	left: 670px;
	top: 364px;
	width: 240px;
	height: 320px;
	box-sizing: border-box;
	background: #f9f9f9;
	border: 1px solid #e4e4e4;
	padding: 0 14px;
	font-family: "Noto Sans", "Noto Sans CJK SC", sans-serif;
}
.wire_title {
	height: 31px;
	line-height: 27px;
	text-align: center;
	font-size: 12px;
	color: #333;
	margin-left: -2px;
}
.wire_hero {
	height: 78px;
	background: #e2e2e2;
	border-radius: 2px;
	display: flex;
	align-items: center;
	justify-content: space-between;
	padding: 0 10px;
	margin-bottom: 9px;
}
.wire_block {
	height: 181px;
	background: #e2e2e2;
	border-radius: 2px;
	padding: 21px 14px 0 15px;
	box-sizing: border-box;
}
.wire_rule {
	width: 100px;
	height: 2px;
	margin-left: 42px;
	background: #c8c8c8;
}
.wire_img {
	width: 81px;
	height: 50px;
	background: #f1f1f1;
	border-radius: 2px;
}
.wire_img.first {
	margin-top: 27px;
}
.wire_row {
	display: flex;
	justify-content: space-between;
	margin-top: 15px;
}
.wire_lines {
	padding: 12px 0 0 4px;
	display: flex;
	flex-direction: column;
	gap: 7px;
}
.wire_lines i {
	width: 72px;
	height: 4px;
	background: #bbb;
}

/* 进度窗口 */
.progress_win {
	position: absolute;
	left: 757px;
	top: 442px;
	width: 290px;
	height: 140px;
	box-sizing: border-box;
	background: #fff;
	border: 1px solid #a0a0a0;
	box-shadow: 0 2px 10px rgba(0,0,0,.35);
	font-family: "Noto Sans", "Noto Sans CJK SC", sans-serif;
}
.progress_title {
	padding: 3px 0 0 3px;
	line-height: 18px;
	font-size: 12px;
	color: #999;
}
.progress_text {
	margin: 14px 0 0 20px;
	line-height: 18px;
	font-size: 12px;
	color: #222;
	white-space: nowrap;
}
.progress_bar {
	margin: 16px 0 0 20px;
	width: 280px;
	height: 23px;
	box-sizing: border-box;
	border: 1px solid #a8a8a8;
	border-radius: 2px;
	background: linear-gradient(#dadada 50%, #c4c4c4 50%);
}
.progress_bar i {
	width: 86px;
	height: 21px;
	background:
		linear-gradient(90deg, rgba(255,255,255,.25), transparent 12px),
		linear-gradient(#c0f3c2 50%, #6fe873 50%);
	border-right: 1px solid #4fd555;
}

/* 提交窗口 */
.commit_win {
	position: absolute;
	left: 1022px;
	top: 271px;
	width: 402px;
	height: 466px;
	box-sizing: border-box;
	background: #f3f3f3;
	border: 1px solid #1783d9;
	box-shadow: 0 4px 18px rgba(0,0,0,.35);
	font-family: "Noto Sans", "Noto Sans CJK SC", sans-serif;
	font-size: 12px;
	color: #222;
}
.commit_head {
	height: 30px;
	background: #fff;
	position: relative;
	display: flex;
	align-items: center;
	padding: 0 0 2px 8px;
	box-sizing: border-box;
	gap: 5px;
}
.commit_rp {
	position: absolute;
	left: 12px;
	top: 11px;
	font-size: 7px;
	line-height: 9px;
	color: #fff;
	font-family: "Liberation Sans", sans-serif;
}
.commit_close {
	position: absolute;
	right: 9px;
	top: 9px;
}
.commit_body {
	padding: 10px 10px 0;
}
.commit_tip {
	line-height: 16px;
}
.commit_table {
	margin-top: 4px;
	height: 170px;
	box-sizing: border-box;
	background: #fff;
	border: 1px solid #b0b0b0;
}
.ct_head {
	height: 16px;
	background: #d4d4d4;
	border-bottom: 1px solid #bbb;
	display: flex;
	line-height: 16px;
	font-size: 11px;
}
.ct_head .c1 {
	width: 100px;
	box-sizing: border-box;
	padding-left: 3px;
	border-right: 1px solid #bbb;
}
.ct_head .c2 {
	width: 249px;
	box-sizing: border-box;
	padding-left: 2px;
	border-right: 1px solid #bbb;
}
.ct_row {
	height: 21px;
	display: flex;
	align-items: center;
	letter-spacing: -.15px;
}
.ct_row .c1 {
	width: 100px;
	letter-spacing: 0;
}
.ct_row.alt {
	background: #fafafa;
}
.commit_label {
	margin-top: 5px;
	line-height: 16px;
}
.commit_note {
	margin-top: 5px;
	height: 169px;
	box-sizing: border-box;
	background: #fff;
	border: 1px solid #4f98e0;
	display: flex;
	justify-content: space-between;
}
.commit_note p {
	line-height: 16px;
}
.note_scroll {
	width: 17px;
	background: #f3f3f3;
	position: relative;
}
.commit_btns {
	margin-top: 10px;
	display: flex;
	justify-content: flex-end;
	gap: 5px;
}
.btn {
	width: 75px;
	height: 23px;
	padding: 0;
	box-sizing: border-box;
	border: 1px solid #8a8a8a;
	border-radius: 3px;
	background: linear-gradient(#f2f2f2 45%, #d4d4d4 55%);
	font-family: "Noto Sans CJK SC", sans-serif;
	font-size: 12px;
	color: #111;
}
.btn.primary {
	border-color: #5f8fb4;
	background: linear-gradient(#e6f4fd 45%, #aedcfa 55%);
}
.red_mark {
	position: absolute;
	left: 1023px;
	top: 511px;
	width: 185px;
	height: 51px;
	box-sizing: border-box;
	border: 1px solid #f33;
}
```
